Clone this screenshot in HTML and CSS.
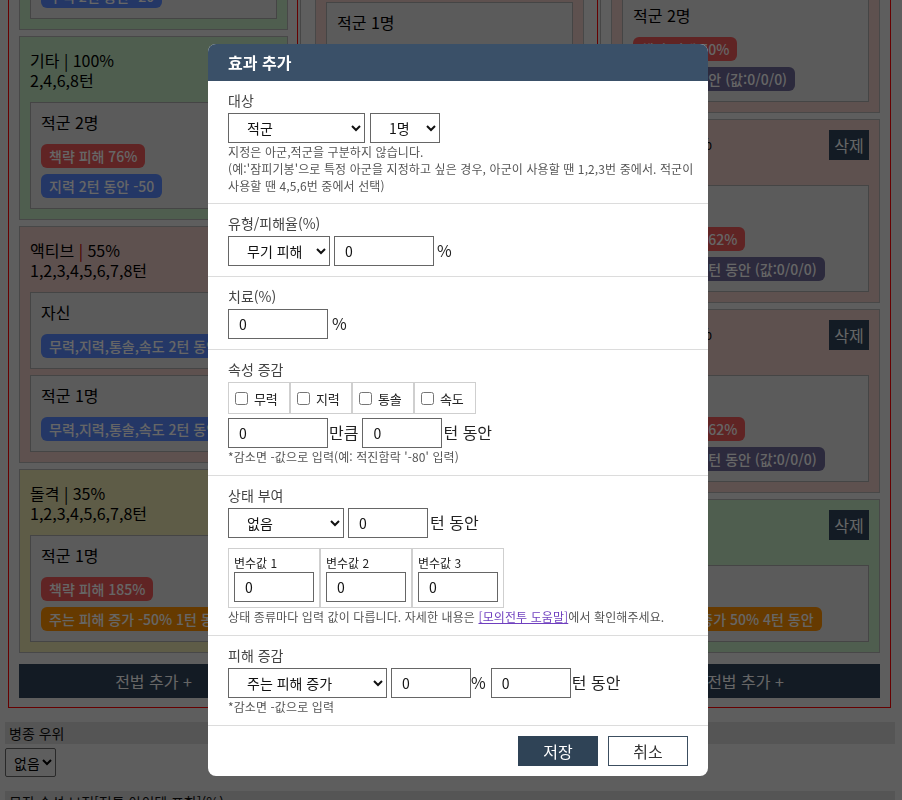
FILE: index.html
```html
<!DOCTYPE html>
<html lang="ko">
<head>
<meta charset="utf-8">
<title>효과 추가</title>
<link rel="stylesheet" href="styles.css">
</head>
<body>
<div class="page">
  <div class="battle">
    <div class="cols">
      <!-- column 1 -->
      <div class="col">
        <div class="card pink spacer-a">
          <div class="card-head"><div class="card-title">전법 | 100%<br>1턴</div><button class="del">삭제</button></div>
        </div>
        <div class="card green">
          <div class="card-head"><div class="card-title">패시브 | 100%<br>1턴</div><button class="del">삭제</button></div>
          <div class="sub">
            <div class="sub-title">적군 1명</div>
            <span class="badge b-red">책략 피해 120%</span>
            <span class="badge b-blue">무력 2턴 동안 -20</span>
          </div>
        </div>
        <div class="card green">
          <div class="card-head"><div class="card-title">기타 | 100%<br>2,4,6,8턴</div><button class="del">삭제</button></div>
          <div class="sub">
            <div class="sub-title">적군 2명</div>
            <span class="badge b-red">책략 피해 76%</span>
            <span class="badge b-blue">지력 2턴 동안 -50</span>
          </div>
        </div>
        <div class="card pink">
          <div class="card-head"><div class="card-title">액티브 <span class="pipe-red">|</span> 55%<br>1,2,3,4,5,6,7,8턴</div><button class="del">삭제</button></div>
          <div class="sub">
            <div class="sub-title">자신</div>
            <span class="badge b-blue">무력,지력,통솔,속도 2턴 동안 +20</span>
          </div>
          <div class="sub">
            <div class="sub-title">적군 1명</div>
            <span class="badge b-blue">무력,지력,통솔,속도 2턴 동안 -20</span>
          </div>
        </div>
        <div class="card yellow">
          <div class="card-head"><div class="card-title">돌격 | 35%<br>1,2,3,4,5,6,7,8턴</div><button class="del">삭제</button></div>
          <div class="sub">
            <div class="sub-title">적군 1명</div>
            <span class="badge b-red">책략 피해 185%</span>
            <span class="badge b-orange">주는 피해 증가 -50% 1턴 동안</span>
          </div>
        </div>
        <button class="add">전법 추가 +</button>
      </div>

      <!-- column 2 -->
      <div class="col">
        <div class="card pink spacer-b">
          <div class="card-head"><div class="card-title">전법 | 100%<br>1턴</div><button class="del">삭제</button></div>
        </div>
        <div class="card pink">
          <div class="card-head"><div class="card-title">액티브 | 40%<br>1,3,5,7턴</div><button class="del">삭제</button></div>
          <div class="sub">
            <div class="sub-title">적군 1명</div>
            <span class="badge b-red">책략 피해 150%</span>
            <span class="badge b-purple">위압 1턴 동안 (값:0/0/0)</span>
          </div>
        </div>
        <div class="card pink">
          <div class="card-head"><div class="card-title">액티브 | 35%<br>2,4,6,8턴</div><button class="del">삭제</button></div>
          <div class="sub">
            <div class="sub-title">자신</div>
            <span class="badge b-blue">통솔 2턴 동안 +30</span>
          </div>
          <div class="sub">
            <div class="sub-title">적군 1명</div>
            <span class="badge b-red">무기 피해 120%</span>
          </div>
        </div>
        <div class="card green">
          <div class="card-head"><div class="card-title">기타 | 100%<br>1,2,3턴</div><button class="del">삭제</button></div>
          <div class="sub">
            <div class="sub-title">아군 2명</div>
            <span class="badge b-blue">지력 2턴 동안 +40</span>
            <span class="badge b-orange">받는 피해 감소 -20% 2턴 동안</span>
          </div>
        </div>
        <button class="add">전법 추가 +</button>
      </div>

      <!-- column 3 -->
      <div class="col">
        <div class="card pink">
          <div class="card-head"><div class="card-title">액티브 | 30%<br>1,3,5,7턴</div><button class="del">삭제</button></div>
          <div class="sub">
            <div class="sub-title">적군 1명</div>
            <span class="badge b-red">책략 피해 90%</span>
            <span class="badge b-purple">혼란 1턴 동안 (값:0/0/0)</span>
          </div>
        </div>
        <div class="card pink">
          <div class="card-head"><div class="card-title">액티브 | 50%<br>2,4,6,8턴</div><button class="del">삭제</button></div>
          <div class="sub">
            <div class="sub-title">적군 2명</div>
            <span class="badge b-red">책략 피해 50%</span>
            <span class="badge b-purple">혼란 1턴 동안 (값:0/0/0)</span>
          </div>
        </div>
        <div class="card pink">
          <div class="card-head"><div class="card-title">패시브 | 50%<br>2,4,6,8턴</div><button class="del">삭제</button></div>
          <div class="sub">
            <div class="sub-title">적군 1명</div>
            <span class="badge b-red">책략 피해 162%</span>
            <span class="badge b-purple">지력 감소 2턴 동안 (값:0/0/0)</span>
          </div>
        </div>
        <div class="card pink">
          <div class="card-head"><div class="card-title">액티브 | 45%<br>1,3,5,7턴</div><button class="del">삭제</button></div>
          <div class="sub">
            <div class="sub-title">적군 1명</div>
            <span class="badge b-red">책략 피해 162%</span>
            <span class="badge b-purple">무력 감소 2턴 동안 (값:0/0/0)</span>
          </div>
        </div>
        <div class="card green">
          <div class="card-head"><div class="card-title">기타 | 100%<br>1턴</div><button class="del">삭제</button></div>
          <div class="sub">
            <div class="sub-title">자신</div>
            <span class="badge b-orange">주는 피해 증가 50% 4턴 동안</span>
          </div>
        </div>
        <button class="add">전법 추가 +</button>
      </div>
    </div>
  </div>

  <div class="bar">병종 우위</div>
  <select class="page-select"><option>없음</option></select>
  <div class="bar bar-next">무장 속성 보정[전투 아이템 포함](%)</div>
</div>

<div class="overlay"></div>

<div class="modal">
  <div class="modal-head">효과 추가</div>

  <div class="sec sec-first">
    <div class="lbl">대상</div>
    <div class="row">
      <select class="sel w137"><option>적군</option></select>
      <select class="sel w70 ml5"><option>1명</option></select>
    </div>
    <div class="help nowrap">지정은 아군,적군을 구분하지 않습니다.<br>(예:'잠피기봉'으로 특정 아군을 지정하고 싶은 경우, 아군이 사용할 땐 1,2,3번 중에서. 적군이<br>사용할 땐 4,5,6번 중에서 선택)</div>
  </div>

  <div class="sec">
    <div class="lbl">유형/피해율(%)</div>
    <div class="row">
      <select class="sel w102"><option>무기 피해</option></select>
      <input class="inp w100 ml4" type="text" value="0">
      <span class="unit ml3">%</span>
    </div>
  </div>

  <div class="sec">
    <div class="lbl">치료(%)</div>
    <div class="row">
      <input class="inp w100" type="text" value="0">
      <span class="unit ml4">%</span>
    </div>
  </div>

  <div class="sec">
    <div class="lbl">속성 증감</div>
    <div class="checks">
      <label class="chk"><input type="checkbox">무력</label>
      <label class="chk"><input type="checkbox">지력</label>
      <label class="chk"><input type="checkbox">통솔</label>
      <label class="chk"><input type="checkbox">속도</label>
    </div>
    <div class="row">
      <input class="inp w100" type="text" value="0">
      <span class="unit ml1">만큼</span>
      <input class="inp w80 ml4" type="text" value="0">
      <span class="unit ml1">턴 동안</span>
    </div>
    <div class="help">*감소면 -값으로 입력(예: 적진함락 '-80' 입력)</div>
  </div>

  <div class="sec">
    <div class="lbl">상태 부여</div>
    <div class="row">
      <select class="sel w116"><option>없음</option></select>
      <input class="inp w80 ml4" type="text" value="0">
      <span class="unit ml2">턴 동안</span>
    </div>
    <div class="vars">
      <div class="var"><div class="var-lbl">변수값 1</div><input class="inp w80" type="text" value="0"></div>
      <div class="var"><div class="var-lbl">변수값 2</div><input class="inp w80" type="text" value="0"></div>
      <div class="var"><div class="var-lbl">변수값 3</div><input class="inp w80" type="text" value="0"></div>
    </div>
    <div class="help">상태 종류마다 입력 값이 다릅니다. 자세한 내용은 <a class="help-link" href="#">[모의전투 도움말]</a>에서 확인해주세요.</div>
  </div>

  <div class="sec">
    <div class="lbl">피해 증감</div>
    <div class="row">
      <select class="sel w159"><option>주는 피해 증가</option></select>
      <input class="inp w80 ml4" type="text" value="0">
      <span class="unit">%</span>
      <input class="inp w80 ml5" type="text" value="0">
      <span class="unit ml1">턴 동안</span>
    </div>
    <div class="help">*감소면 -값으로 입력</div>
  </div>

  <div class="foot">
    <button class="btn save">저장</button>
    <button class="btn cancel">취소</button>
  </div>
</div>
</body>
</html>
```

FILE: styles.css
```css
* { box-sizing: border-box; }

html, body {
  margin: 0;
  padding: 0;
  overflow: hidden;
}

body {
  width: 902px;
  height: 800px;
  background: #ebebeb;
  font-family: "Noto Sans CJK KR", "Noto Sans", sans-serif;
  color: #000;
}

/* ---------- background page ---------- */
.battle {
  margin: -272px 0 0 8px;
  width: 883px;
  border: 1px solid #ff0000;
  padding: 10px 10px 9px;
}

.cols {
  display: grid;
  grid-template-columns: repeat(3, 269px);
  column-gap: 27px;
  align-items: start;
  background-image: linear-gradient(to right,
    transparent 278px, #ff0000 278px, #ff0000 279px, transparent 279px,
    transparent 281px, #b0b0b0 281px, #b0b0b0 282px, transparent 282px,
    transparent 578px, #ff0000 578px, #ff0000 579px, transparent 579px,
    transparent 581px, #b0b0b0 581px, #b0b0b0 582px, transparent 582px);
}

.col {
  display: flex;
  flex-direction: column;
  gap: 6px;
}

.card {
  border: 1px solid #b4b4b4;
  padding: 10px;
  display: flex;
  flex-direction: column;
  gap: 6px;
}

.spacer-a { height: 101px; overflow: hidden; }
.spacer-b { height: 191px; overflow: hidden; }

.green { background: #c6ebc6; }
.pink { background: #ebcbc6; }
.yellow { background: #ebe6b2; }

.card-head {
  display: flex;
  justify-content: space-between;
  align-items: flex-start;
  margin-bottom: 6px;
}

.card-title {
  margin-top: 3px;
  font-size: 16px;
  line-height: 20px;
}

.pipe-red { color: #c00000; }

.del {
  width: 40px;
  height: 30px;
  padding: 0;
  border: 0;
  background: #30445a;
  color: #fff;
  font-family: "Noto Sans CJK KR", sans-serif;
  font-size: 16px;
  line-height: 30px;
}

.sub {
  background: #e4e4e4;
  border: 1px solid #adadad;
  padding: 10px;
  display: flex;
  flex-direction: column;
  align-items: flex-start;
  gap: 6px;
}

.sub-title {
  font-size: 16px;
  line-height: 18px;
  margin-bottom: 7px;
}

.badge {
  height: 24px;
  line-height: 24px;
  padding: 0 8px;
  border-radius: 6px;
  font-size: 14px;
  font-weight: 500;
  color: #fff;
  white-space: nowrap;
}

.b-red { background: #f05a5a; }
.b-blue { background: #5a8aff; }
.b-orange { background: #ff9100; }
.b-purple { background: #6e6998; }

.add {
  margin-top: 5px;
  width: 100%;
  height: 34px;
  border: 0;
  background: #30445a;
  color: #fff;
  font-family: "Noto Sans CJK KR", sans-serif;
  font-size: 16px;
}

.bar {
  margin: 14px 0 0 5px;
  width: 890px;
  height: 22px;
  padding-left: 4px;
  background: #d4d4d4;
  font-size: 14px;
  line-height: 22px;
  color: #111;
}

.bar-next { margin-top: 14px; }

.page-select {
  display: block;
  margin: 4px 0 0 5px;
  width: 51px;
  height: 29px;
  padding: 0 0 0 4px;
  border: 1px solid #666;
  border-radius: 2px;
  background: #ebebeb;
  font-family: "Noto Sans CJK KR", sans-serif;
  font-size: 14px;
  color: #000;
}

/* ---------- modal ---------- */
.overlay {
  position: fixed;
  inset: 0;
  background: rgba(0, 0, 0, 0.6);
}

.modal {
  position: fixed;
  left: 208px;
  top: 44px;
  width: 500px;
  background: #fff;
  border-radius: 8px;
  overflow: hidden;
  color: #222;
}

.modal-head {
  height: 37px;
  padding: 0 20px;
  background: #3a5068;
  color: #fff;
  font-size: 16px;
  font-weight: 700;
  line-height: 37px;
}

.sec {
  padding: 9px 20px 10px;
  border-bottom: 1px solid #dcdcdc;
}

.sec-first { padding-bottom: 9px; }

.lbl {
  font-size: 14px;
  line-height: 20px;
  color: #444;
  margin-bottom: 3px;
}

.row {
  display: flex;
  align-items: baseline;
}

.sel, .inp {
  height: 30px;
  border: 1px solid #666;
  border-radius: 0;
  background: #fff;
  color: #111;
  font-family: "Noto Sans CJK KR", sans-serif;
  font-size: 14px;
}

.sel { padding: 0 4px 0 14px; }
.inp { padding: 0 10px; }

.w70 { width: 70px; }
.w80 { width: 80px; }
.w100 { width: 100px; }
.w102 { width: 102px; }
.w116 { width: 116px; }
.w137 { width: 137px; }
.w159 { width: 159px; }

.ml1 { margin-left: 1px; }
.ml2 { margin-left: 2px; }
.ml3 { margin-left: 3px; }
.ml4 { margin-left: 4px; }
.ml5 { margin-left: 5px; }

.unit {
  font-size: 16px;
  color: #222;
}

.help {
  font-size: 12px;
  line-height: 17px;
  letter-spacing: 0.1px;
  color: #555;
}

.nowrap { white-space: nowrap; }

.help-link {
  color: #6f3fbf;
  text-decoration: underline;
}

.checks {
  display: flex;
  margin-bottom: 4px;
}

.chk {
  width: 62px;
  height: 32px;
  border: 1px solid #cfcfcf;
  display: flex;
  align-items: center;
  font-size: 13px;
  letter-spacing: -0.3px;
  color: #222;
}

.chk input {
  margin: 0 6px;
  width: 13px;
  height: 13px;
}

.vars {
  display: flex;
  margin-top: 10px;
}

.var {
  width: 92px;
  height: 60px;
  border: 1px solid #cfcfcf;
  padding: 5px;
}

.var-lbl {
  font-size: 12px;
  line-height: 18px;
  color: #222;
}

.foot {
  display: flex;
  justify-content: flex-end;
  gap: 10px;
  padding: 10px 20px;
}

.btn {
  width: 80px;
  height: 30px;
  font-family: "Noto Sans CJK KR", sans-serif;
  font-size: 16px;
  border-radius: 0;
}

.save {
  background: #2f4356;
  border: 1px solid #2f4356;
  color: #fff;
}

.cancel {
  background: #fff;
  border: 1px solid #3c4e60;
  color: #333;
}
```
